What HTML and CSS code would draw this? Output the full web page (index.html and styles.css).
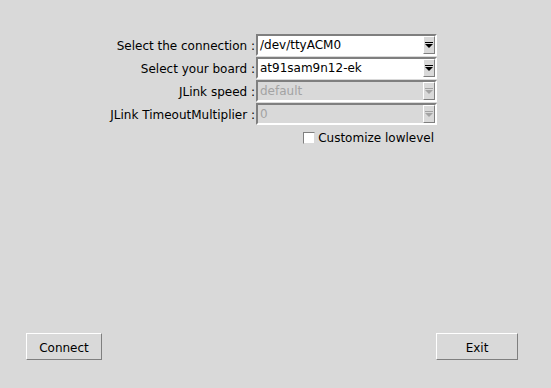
FILE: index.html
```html
<!DOCTYPE html>
<html lang="en">

<head>
  <meta charset="UTF-8">
  <title>Connection</title>
  <link rel="stylesheet" href="styles.css">
</head>

<body>
  <div class="window">
    <div class="form">
      <label class="lbl">Select the connection :</label>
      <div class="combo">
        <span class="value">/dev/ttyACM0</span>
        <span class="arrow"><svg width="8" height="6" viewBox="0 0 8 6"><rect x="0" y="0" width="8" height="1" fill="#000"/><polygon points="0,2 8,2 4,6" fill="#000"/></svg></span>
      </div>

      <label class="lbl">Select your board :</label>
      <div class="combo">
        <span class="value">at91sam9n12-ek</span>
        <span class="arrow"><svg width="8" height="6" viewBox="0 0 8 6"><rect x="0" y="0" width="8" height="1" fill="#000"/><polygon points="0,2 8,2 4,6" fill="#000"/></svg></span>
      </div>

      <label class="lbl">JLink speed :</label>
      <div class="combo disabled">
        <span class="value">default</span>
        <span class="arrow"><svg width="8" height="6" viewBox="0 0 8 6"><rect x="0" y="0" width="8" height="1" fill="#a3a3a3"/><polygon points="0,2 8,2 4,6" fill="#a3a3a3"/></svg></span>
      </div>

      <label class="lbl">JLink TimeoutMultiplier :</label>
      <div class="combo disabled">
        <span class="value">0</span>
        <span class="arrow"><svg width="8" height="6" viewBox="0 0 8 6"><rect x="0" y="0" width="8" height="1" fill="#a3a3a3"/><polygon points="0,2 8,2 4,6" fill="#a3a3a3"/></svg></span>
      </div>

      <div class="check-row">
        <span class="check"></span>
        <span>Customize lowlevel</span>
      </div>
    </div>

    <div class="buttons">
      <button class="btn btn-connect" type="button">Connect</button>
      <button class="btn btn-exit" type="button">Exit</button>
    </div>
  </div>
</body>

</html>
```

FILE: styles.css
```css
body {
  margin: 0;
  background: #d9d9d9;
  font-family: "DejaVu Sans", sans-serif;
  font-size: 12px;
  color: #000;
}

.window {
  width: 551px;
  height: 388px;
  box-sizing: border-box;
  padding: 34px 0 0 0;
  display: flex;
  flex-direction: column;
}

.form {
  display: grid;
  grid-template-columns: 146px 181px;
  row-gap: 1px;
  margin-left: 110px;
}

.lbl {
  text-align: right;
  line-height: 22px;
  padding: 1px 1px 0 0;
  height: 22px;
  box-sizing: border-box;
  white-space: nowrap;
}

.combo {
  display: flex;
  height: 22px;
  box-sizing: border-box;
  border: 2px solid;
  border-color: #7f7f7f #ffffff #ffffff #7f7f7f;
  background: #ffffff;
}

.combo .value {
  flex: 1;
  padding: 1px 0 0 2px;
  line-height: 17px;
}

.combo .arrow {
  width: 12px;
  box-sizing: border-box;
  border: 1px solid;
  border-color: #ffffff #7f7f7f #7f7f7f #ffffff;
  background: #d9d9d9;
  display: flex;
  align-items: center;
  justify-content: center;
}

.combo.disabled {
  background: #d9d9d9;
  color: #a3a3a3;
}

.check-row {
  grid-column: 2;
  display: flex;
  justify-content: flex-end;
  align-items: center;
  gap: 3px;
  padding: 4px 3px 0 0;
  line-height: 16px;
}

.check {
  width: 12px;
  height: 12px;
  box-sizing: border-box;
  border: 1px solid;
  border-color: #7f7f7f #d9d9d9 #d9d9d9 #7f7f7f;
  background: #ffffff;
}

.buttons {
  margin-top: auto;
  margin-bottom: 28px;
  display: flex;
  justify-content: space-between;
  padding: 0 33px 0 26px;
}

.btn {
  height: 27px;
  box-sizing: border-box;
  border: 1px solid;
  border-color: #ffffff #7f7f7f #7f7f7f #ffffff;
  background: #d9d9d9;
  font-family: "DejaVu Sans", sans-serif;
  font-size: 12px;
  color: #000;
  padding: 2px 0 0 0;
}

.btn-connect {
  width: 76px;
}

.btn-exit {
  width: 82px;
}
```
